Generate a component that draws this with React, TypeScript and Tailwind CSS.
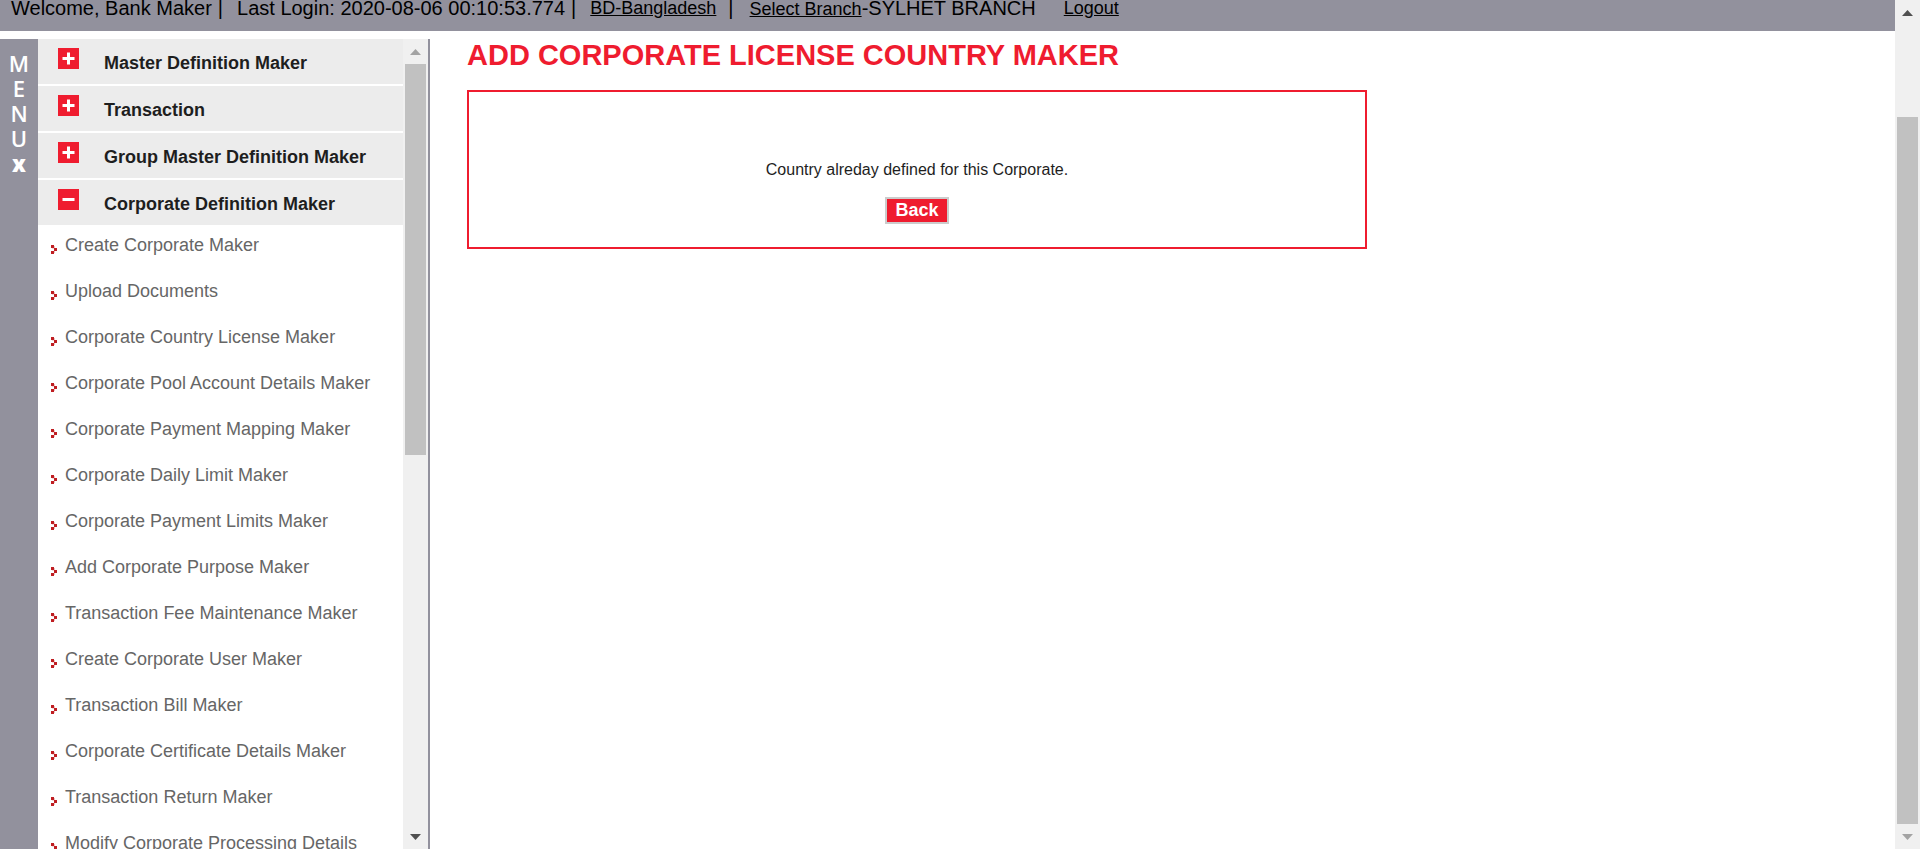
const sections = [
  { label: "Master Definition Maker", open: false },
  { label: "Transaction", open: false },
  { label: "Group Master Definition Maker", open: false },
  { label: "Corporate Definition Maker", open: true },
];

const links = [
  "Create Corporate Maker",
  "Upload Documents",
  "Corporate Country License Maker",
  "Corporate Pool Account Details Maker",
  "Corporate Payment Mapping Maker",
  "Corporate Daily Limit Maker",
  "Corporate Payment Limits Maker",
  "Add Corporate Purpose Maker",
  "Transaction Fee Maintenance Maker",
  "Create Corporate User Maker",
  "Transaction Bill Maker",
  "Corporate Certificate Details Maker",
  "Transaction Return Maker",
  "Modify Corporate Processing Details",
];

function ToggleIcon({ open }: { open: boolean }) {
  return (
    <svg width="21" height="21" viewBox="0 0 21 21" className="shrink-0" aria-hidden="true">
      <rect width="21" height="21" fill="#ef1c2f" />
      <rect x="4.5" y="9" width="12" height="3" fill="#fff" />
      {!open && <rect x="9" y="4.5" width="3" height="12" fill="#fff" />}
    </svg>
  );
}

function Bullet() {
  return (
    <svg width="6" height="9" viewBox="0 0 6 9" className="mt-5 shrink-0" shapeRendering="crispEdges" aria-hidden="true">
      <rect width="3" height="3" fill="#bf1e22" />
      <rect x="3" y="1" width="1" height="2" fill="#eec4c4" />
      <rect x="3" y="3" width="3" height="3" fill="#bf1e22" />
      <rect x="1" y="3" width="2" height="1" fill="#f3d6d6" />
      <rect y="6" width="3" height="3" fill="#bf1e22" />
      <rect x="3" y="6" width="1" height="2" fill="#eec4c4" />
    </svg>
  );
}

function Arrow({ down, dark }: { down?: boolean; dark?: boolean }) {
  return (
    <div className="flex h-[25px] shrink-0 items-center justify-center">
      <svg width="11" height="6" viewBox="0 0 11 6" aria-hidden="true">
        <path d={down ? "M0 0h11L5.5 6z" : "M0 6h11L5.5 0z"} fill={dark ? "#505050" : "#a3a3a3"} />
      </svg>
    </div>
  );
}

export default function App() {
  return (
    <div className="flex h-screen overflow-hidden bg-white font-['Liberation_Sans',Arial,sans-serif]">
      <div className="flex min-w-0 grow flex-col gap-2">
        <header className="flex h-[31px] shrink-0 items-start overflow-hidden bg-[#92919d] px-[11px] text-xl leading-4 whitespace-nowrap text-black">
          <span>Welcome, Bank Maker</span>
          <span className="mr-[14px] ml-[6px]">|</span>
          <span>Last Login: 2020-08-06 00:10:53.774</span>
          <span className="mr-[14px] ml-[6px]">|</span>
          <a href="#country" className="text-lg leading-4 underline">BD-Bangladesh</a>
          <span className="mr-4 ml-3">|</span>
          <span>
            <a href="#branch" className="text-lg leading-4 underline">Select Branch</a>-SYLHET BRANCH
          </span>
          <a href="#logout" className="ml-7 text-lg leading-4 underline">Logout</a>
        </header>

        <div className="flex min-h-0 grow">
          <button
            type="button"
            className="flex w-[38px] shrink-0 flex-col items-center bg-[#92919d] pt-3 font-['Open_Sans',sans-serif] text-[22px] leading-[25px] font-semibold text-white"
          >
            <span>M</span>
            <span>E</span>
            <span>N</span>
            <span>U</span>
            <span className="font-extrabold">x</span>
          </button>

          <aside className="flex w-[392px] shrink-0 border-r-2 border-[#92919d]">
            <nav className="min-w-0 grow overflow-hidden">
              <div className="flex flex-col gap-[2px]">
                {sections.map((s) => (
                  <button
                    key={s.label}
                    type="button"
                    aria-expanded={s.open}
                    className="flex h-[45px] items-start gap-[25px] bg-[#ececec] pt-[9px] pl-5 text-left text-lg leading-[30px] font-bold text-[#1e1e1e]"
                  >
                    <ToggleIcon open={s.open} />
                    <span>{s.label}</span>
                  </button>
                ))}
              </div>
              <ul>
                {links.map((label) => (
                  <li key={label}>
                    <a href="#menu" className="flex h-[46px] items-start gap-2 pl-[13px] text-lg leading-10 text-[#666666]">
                      <Bullet />
                      {label}
                    </a>
                  </li>
                ))}
              </ul>
            </nav>
            <div className="flex w-[25px] shrink-0 flex-col bg-[#f0f0f0]">
              <Arrow />
              <div className="flex grow flex-col px-[2px]">
                <div className="h-[391px] bg-[#c1c1c1]" />
              </div>
              <Arrow down dark />
            </div>
          </aside>

          <main className="min-w-0 grow pl-[37px]">
            <h1 className="text-[29px] leading-8 font-bold text-[#ef1c2f]">ADD CORPORATE LICENSE COUNTRY MAKER</h1>
            <section className="mt-[19px] flex h-[159px] w-[900px] max-w-full flex-col items-center border-2 border-[#ef1c2f] pt-[68px] text-base leading-5 text-[#1e1e1e]">
              <p>Country alreday defined for this Corporate.</p>
              <button
                type="button"
                className="mt-[17px] border-2 border-[#cccccc] bg-[#ef1c2f] px-2 text-lg leading-[23px] font-bold text-white"
              >
                Back
              </button>
            </section>
          </main>
        </div>
      </div>

      <div className="flex w-[25px] shrink-0 flex-col bg-[#f0f0f0]">
        <Arrow dark />
        <div className="flex grow flex-col px-[2px] pt-[92px]">
          <div className="grow bg-[#c1c1c1]" />
        </div>
        <Arrow down />
      </div>
    </div>
  );
}
